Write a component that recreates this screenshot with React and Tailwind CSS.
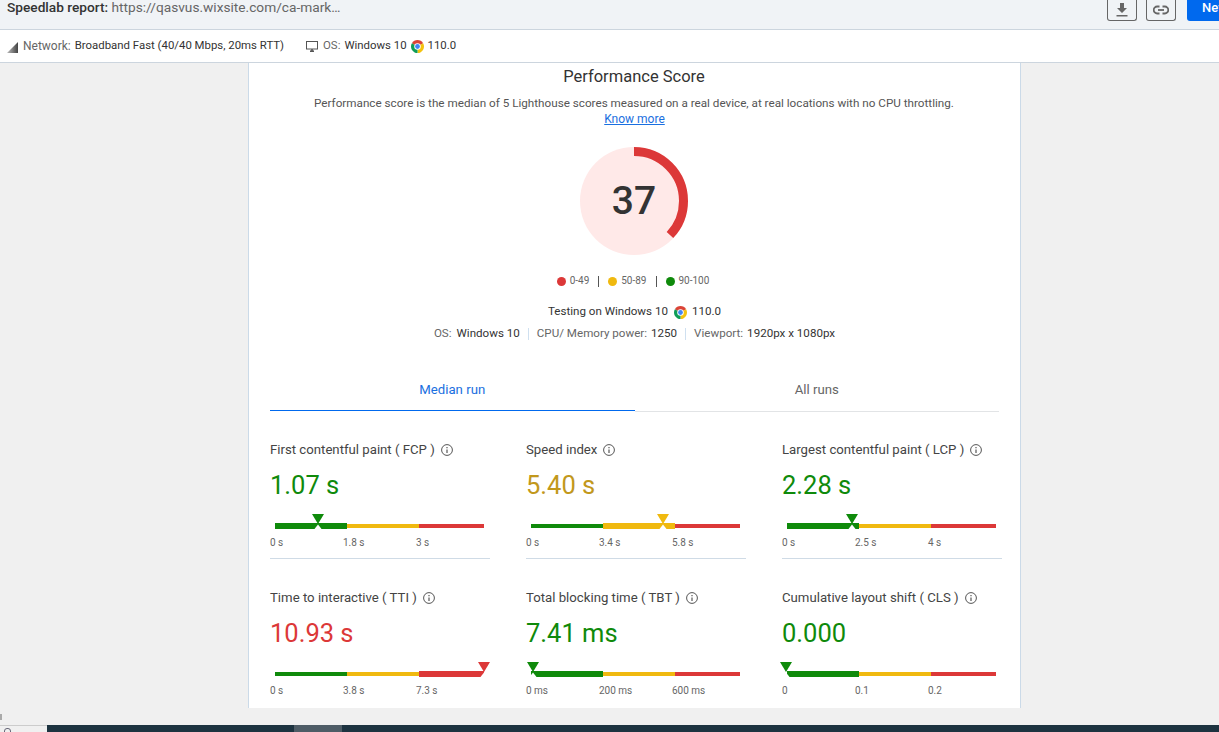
const font = { fontFamily: 'Roboto, "Noto Sans", sans-serif' };

function Chrome({ className }) {
  return (
    <svg viewBox="0 0 24 24" className={className}>
      <path d="M12 12L1.61 6A12 12 0 0 1 22.39 6Z" fill="#db4437" />
      <path d="M12 12L22.39 6A12 12 0 0 1 12 24Z" fill="#f4c20d" />
      <path d="M12 12L12 24A12 12 0 0 1 1.61 6Z" fill="#0f9d58" />
      <circle cx="12" cy="12" r="6" fill="#fff" />
      <circle cx="12" cy="12" r="4.4" fill="#4285f4" />
    </svg>
  );
}

function Info() {
  return (
    <svg viewBox="0 0 12 12" className="w-3 h-3 shrink-0" fill="none" stroke="#555">
      <circle cx="6" cy="6" r="5.4" strokeWidth="1" />
      <path d="M6 5.4V9" strokeWidth="1.2" />
      <path d="M6 3V4.2" strokeWidth="1.2" />
    </svg>
  );
}

const metrics = [
  { label: 'First contentful paint ( FCP )', value: '1.07 s', color: 'text-[#0f8a0b]', ticks: ['0 s', '1.8 s', '3 s'], active: 0, marker: 43, mc: '#0f8a0b' },
  { label: 'Speed index', value: '5.40 s', color: 'text-[#c2981c]', ticks: ['0 s', '3.4 s', '5.8 s'], active: 1, marker: 132, mc: '#f0b90f' },
  { label: 'Largest contentful paint ( LCP )', value: '2.28 s', color: 'text-[#0f8a0b]', ticks: ['0 s', '2.5 s', '4 s'], active: 0, marker: 65, mc: '#0f8a0b' },
  { label: 'Time to interactive ( TTI )', value: '10.93 s', color: 'text-[#dc3838]', ticks: ['0 s', '3.8 s', '7.3 s'], active: 2, marker: 209, mc: '#dc3838' },
  { label: 'Total blocking time ( TBT )', value: '7.41 ms', color: 'text-[#0f8a0b]', ticks: ['0 ms', '200 ms', '600 ms'], active: 0, marker: 2, mc: '#0f8a0b' },
  { label: 'Cumulative layout shift ( CLS )', value: '0.000', color: 'text-[#0f8a0b]', ticks: ['0', '0.1', '0.2'], active: 0, marker: -1, mc: '#0f8a0b' },
];

function Segment({ width, color, active }) {
  return <div className={`${color} ${active ? 'h-[6px]' : 'h-1'}`} style={{ width }} />;
}

function Metric({ m, divider }) {
  return (
    <div className="w-[220px] h-[148px]">
      <div className={`w-[220px] h-[129px] ${divider ? 'border-b border-[#cfdbe6]' : ''}`}>
        <div className="h-[20px] pt-[10px] box-content flex items-center gap-[6px] text-[13.2px] leading-[20px] text-[#444] whitespace-nowrap">
          <span>{m.label}</span>
          <Info />
        </div>
        <div className={`mt-[7px] h-[36px] text-[25.5px] leading-[36px] ${m.color}`}>{m.value}</div>
        <div className="relative ml-[5px] mt-[20px] w-[209px] h-[6px] flex items-center">
          <Segment width={72} color="bg-[#0f8a0b]" active={m.active === 0} />
          <Segment width={72} color="bg-[#f0b90f]" active={m.active === 1} />
          <Segment width={65} color="bg-[#dc3838]" active={m.active === 2} />
          <svg viewBox="0 0 14 15" className="absolute top-[-9px] w-[14px] h-[15px]" style={{ left: m.marker - 7 }}>
            <path d="M1 0H13L7 10Z" fill={m.mc} />
            <path d="M7 10.5L3.5 15H10.5Z" fill="#fff" />
          </svg>
        </div>
        <div className="mt-[7px] grid grid-cols-[73px_73px_1fr] text-[10px] leading-[14px] text-[#666]">
          {m.ticks.map((t) => (
            <span key={t}>{t}</span>
          ))}
        </div>
      </div>
    </div>
  );
}

export default function App() {
  const r = 49.5;
  const c = 2 * Math.PI * r;
  return (
    <div style={font} className="relative w-[1219px] h-[732px] overflow-hidden flex flex-col bg-[#f0f0f0] text-[#333]">
      <header className="h-[30px] shrink-0 bg-[#f0f3f6] border-b border-[#ccd5de] flex items-start justify-between pl-[7px]">
        <div className="text-[13.7px] leading-[15px] whitespace-nowrap text-[#666]">
          <span className="font-medium text-[#333]">Speedlab report: </span>
          https://qasvus.wixsite.com/ca-mark…
        </div>
        <div className="flex items-start">
          <button className="w-[30px] h-[21px] border border-[#666] border-t-0 rounded-b-[3px] flex items-center justify-center">
            <svg viewBox="0 0 12 14" className="w-3 h-[14px]" fill="#666">
              <path d="M4 0H8V5H11L6 10L1 5H4Z" />
              <rect x="0.5" y="12" width="11" height="1.5" />
            </svg>
          </button>
          <button className="ml-[9px] w-[30px] h-[21px] border border-[#666] border-t-0 rounded-b-[3px] flex items-center justify-center">
            <svg viewBox="0 0 16 10" className="w-4 h-[10px]" fill="none" stroke="#666" strokeWidth="1.8">
              <path d="M6.5 1.5H4.2A3.5 3.5 0 0 0 4.2 8.5H6.5" />
              <path d="M9.5 1.5H11.8A3.5 3.5 0 0 1 11.8 8.5H9.5" />
              <path d="M5 5H11" />
            </svg>
          </button>
          <div className="ml-[11px] w-[32px] h-[21px] bg-[#0069ee] rounded-bl-[3px] pl-[15px] text-[13px] leading-[15px] font-medium text-white overflow-hidden whitespace-nowrap">
            New
          </div>
        </div>
      </header>

      <div className="h-[33px] shrink-0 bg-white border-b border-[#ccd5de] flex items-center pl-[7px] text-[11.4px] whitespace-nowrap">
        <svg viewBox="0 0 11 11" className="w-[11px] h-[11px] mt-[3px]">
          <defs>
            <linearGradient id="net" x1="0" x2="1" y1="0" y2="0">
              <stop offset="0" stopColor="#bbb" />
              <stop offset="1" stopColor="#444" />
            </linearGradient>
          </defs>
          <path d="M0 11L11 0V11Z" fill="url(#net)" />
        </svg>
        <span className="ml-[5px] text-[#666] text-[12px]">Network:</span>
        <span className="ml-[4px] text-[#333]">Broadband Fast (40/40 Mbps, 20ms RTT)</span>
        <svg viewBox="0 0 12 11" className="ml-[22px] w-3 h-[11px]" fill="none" stroke="#555">
          <rect x="0.5" y="0.5" width="11" height="7.5" strokeWidth="1" />
          <path d="M4 10.2H8" strokeWidth="1.6" />
          <path d="M6 8V10" strokeWidth="1.6" />
        </svg>
        <span className="ml-[5px] text-[#666]">OS:</span>
        <span className="ml-[4px] text-[#333]">Windows 10</span>
        <Chrome className="ml-[4px] w-[13px] h-[13px]" />
        <span className="ml-[4px] text-[#333]">110.0</span>
      </div>

      <main className="flex-1 min-h-0 pl-[248px] pb-[17px]">
        <section className="w-[773px] h-full bg-white border-x border-[#cbdae8] flex flex-col items-center overflow-hidden">
          <h1 className="mt-[2px] mr-px h-[24px] shrink-0 text-[16.5px] leading-[24px] text-[#333]">Performance Score</h1>
          <p className="mt-[6px] mr-px shrink-0 text-[11.7px] leading-[16px] text-[#555] whitespace-nowrap">
            Performance score is the median of 5 Lighthouse scores measured on a real device, at real locations with no CPU throttling.
          </p>
          <a className="shrink-0 text-[12px] leading-[16px] text-[#1a6fe0] underline">Know more</a>

          <div className="relative shrink-0 mt-[20px] mr-px w-[108px] h-[108px] rounded-full bg-[#ffe9e8] flex items-center justify-center">
            <svg viewBox="0 0 108 108" className="absolute inset-0 w-[108px] h-[108px] -rotate-90">
              <circle cx="54" cy="54" r={r} fill="none" stroke="#dc3838" strokeWidth="9" strokeDasharray={`${c * 0.37} ${c}`} />
            </svg>
            <span className="text-[39px] leading-none font-medium text-[#333]">37</span>
          </div>

          <div className="mt-[18px] mr-[3px] h-[16px] shrink-0 flex items-center text-[10px] leading-[16px] text-[#666]">
            <span className="w-[9px] h-[9px] rounded-full bg-[#dc3838]" />
            <span className="ml-[4px]">0-49</span>
            <span className="mx-[9px] h-[11px] w-px bg-[#555]" />
            <span className="w-[9px] h-[9px] rounded-full bg-[#f0b90f]" />
            <span className="ml-[4px]">50-89</span>
            <span className="mx-[9px] h-[11px] w-px bg-[#555]" />
            <span className="w-[9px] h-[9px] rounded-full bg-[#0f8a0b]" />
            <span className="ml-[4px]">90-100</span>
          </div>

          <div className="mt-[15px] h-[16px] shrink-0 flex items-center text-[11.6px] text-[#333]">
            <span>Testing on Windows 10</span>
            <Chrome className="ml-[6px] w-[13px] h-[13px]" />
            <span className="ml-[5px]">110.0</span>
          </div>

          <div className="mt-[6px] h-[16px] shrink-0 flex items-center text-[11.6px] text-[#666] whitespace-nowrap">
            <span>OS:</span>
            <span className="ml-[5px] text-[#333]">Windows 10</span>
            <span className="mx-[8px] w-px h-[12px] bg-[#cfe0f0]" />
            <span>CPU/ Memory power:</span>
            <span className="ml-[4px] text-[#333]">1250</span>
            <span className="mx-[8px] w-px h-[12px] bg-[#cfe0f0]" />
            <span>Viewport:</span>
            <span className="ml-[4px] text-[#333]">1920px x 1080px</span>
          </div>

          <div className="mt-[22px] w-[729px] grid grid-cols-2 items-start shrink-0 text-[13.2px]">
            <div className="h-[47px] pt-[6px] flex items-center justify-center text-[#1a6fe0] border-b border-[#0069ee]">Median run</div>
            <div className="h-[48px] pt-[5px] flex items-center justify-center text-[#666] border-b border-[#e2e4e6]">All runs</div>
          </div>

          <div className="mt-[18px] self-start ml-[21px] grid grid-cols-[220px_220px_220px] gap-x-[36px]">
            {metrics.map((m, i) => (
              <Metric key={m.label} m={m} divider={i < 3} />
            ))}
          </div>
        </section>
      </main>

      <div className="h-[7px] shrink-0 flex bg-[#1d3340]">
        <div className="w-[47px] bg-[#f0f0f0] border-t border-[#ccc] pl-[4px] overflow-hidden">
          <div className="mt-[2px] w-[7px] h-[8px] rounded-t-[3px] border border-[#667]" />
        </div>
        <div className="ml-[247px] w-[48px] bg-[#4e5c66]" />
      </div>
      <div className="absolute left-0 top-[714px] w-[2px] h-[6px] bg-[#aaa]" />
    </div>
  );
}
